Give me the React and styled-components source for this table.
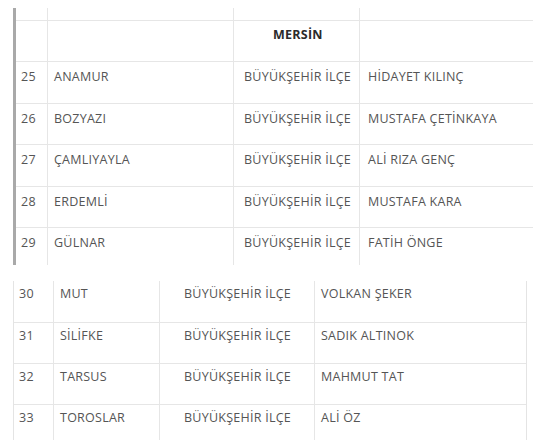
import React from "react";
import styled, { createGlobalStyle } from "styled-components";

const GlobalStyle = createGlobalStyle`
  *, *::before, *::after {
    box-sizing: border-box;
  }
  body {
    margin: 0;
    background: #fff;
    font-family: "Open Sans", "Liberation Sans", sans-serif;
  }
`;

const Page = styled.div`
  width: 552px;
  height: 440px;
  overflow: hidden;
  background: #fff;
`;

const Shot = styled.div`
  margin-left: 13px;
  margin-top: ${(p) => p.top}px;
  width: ${(p) => p.width}px;
  border-left: ${(p) => (p.thick ? "3px solid #a9a9a9" : "1px solid #e4e4e4")};
  border-right: ${(p) => (p.closed ? "1px solid #e4e4e4" : "none")};
`;

const Row = styled.div`
  display: grid;
  grid-template-columns: ${(p) => p.cols};
  height: ${(p) => p.h}px;
  border-bottom: ${(p) => (p.last ? "none" : "1px solid #e6e6e6")};
`;

const Cell = styled.div`
  border-right: 1px solid #e6e6e6;
  padding: ${(p) => p.pt || 0}px 0 0 ${(p) => p.pl || 0}px;
  font-size: 12.5px;
  line-height: 18px;
  color: #555;
  white-space: nowrap;
  overflow: hidden;
  letter-spacing: 0.25px;

  &:last-child {
    border-right: none;
  }
`;

const Heading = styled(Cell)`
  font-weight: 700;
  color: #2b2b2b;
`;

const TOP_COLS = "32px 186px 126px 173px";
const BOTTOM_COLS = "40px 106px 155px 211px";

const topRows = [
  ["25", "ANAMUR", "BÜYÜKŞEHİR İLÇE", "HİDAYET KILINÇ", 42],
  ["26", "BOZYAZI", "BÜYÜKŞEHİR İLÇE", "MUSTAFA ÇETİNKAYA", 41],
  ["27", "ÇAMLIYAYLA", "BÜYÜKŞEHİR İLÇE", "ALİ RIZA GENÇ", 42],
  ["28", "ERDEMLİ", "BÜYÜKŞEHİR İLÇE", "MUSTAFA KARA", 41],
  ["29", "GÜLNAR", "BÜYÜKŞEHİR İLÇE", "FATİH ÖNGE", 37],
];

const bottomRows = [
  ["30", "MUT", "BÜYÜKŞEHİR İLÇE", "VOLKAN ŞEKER", 42],
  ["31", "SİLİFKE", "BÜYÜKŞEHİR İLÇE", "SADIK ALTINOK", 41],
  ["32", "TARSUS", "BÜYÜKŞEHİR İLÇE", "MAHMUT TAT", 41],
  ["33", "TOROSLAR", "BÜYÜKŞEHİR İLÇE", "ALİ ÖZ", 42],
];

function App() {
  return (
    <Page>
      <GlobalStyle />
      <Shot top={8} width={520} thick>
        <Row cols={TOP_COLS} h={13}>
          <Cell />
          <Cell />
          <Cell />
          <Cell />
        </Row>
        <Row cols={TOP_COLS} h={41}>
          <Cell />
          <Cell />
          <Heading pt={5} pl={39}>MERSİN</Heading>
          <Cell />
        </Row>
        {topRows.map((r, i) => (
          <Row key={r[0]} cols={TOP_COLS} h={r[4]} last={i === topRows.length - 1}>
            <Cell pt={6} pl={5}>{r[0]}</Cell>
            <Cell pt={6} pl={6}>{r[1]}</Cell>
            <Cell pt={6} pl={10}>{r[2]}</Cell>
            <Cell pt={6} pl={8}>{r[3]}</Cell>
          </Row>
        ))}
      </Shot>
      <Shot top={16} width={514} closed>
        {bottomRows.map((r) => (
          <Row key={r[0]} cols={BOTTOM_COLS} h={r[4]}>
            <Cell pt={4} pl={5}>{r[0]}</Cell>
            <Cell pt={4} pl={6}>{r[1]}</Cell>
            <Cell pt={4} pl={24}>{r[2]}</Cell>
            <Cell pt={4} pl={6}>{r[3]}</Cell>
          </Row>
        ))}
      </Shot>
    </Page>
  );
}

export default App;
